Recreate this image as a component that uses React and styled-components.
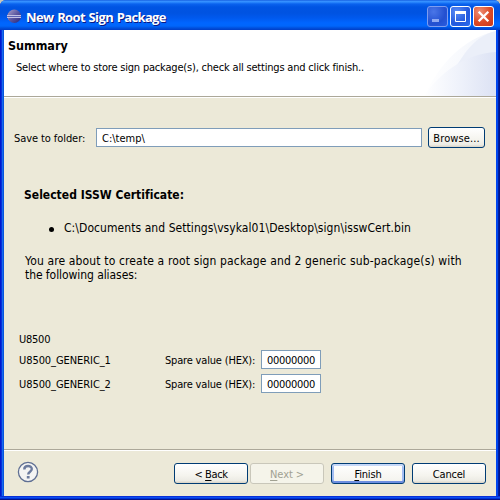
import React from "react";
import styled, { createGlobalStyle, css } from "styled-components";

const GlobalStyle = createGlobalStyle`
  * { box-sizing: border-box; }
  body { margin: 0; overflow: hidden; background: #c9c7ba; }
`;

const Window = styled.main`
  width: 500px;
  height: 500px;
  display: flex;
  flex-direction: column;
  padding: 0 4px 4px;
  overflow: hidden;
  border-radius: 6px 6px 0 0;
  background:
    linear-gradient(#0a2fd8 0 1px, #0a4ff0 1px 2px, #0030d8 2px 3px, #00138c 3px) 0 100% / 100% 4px no-repeat,
    linear-gradient(90deg, #0019cf 0 1px, #0831d9 1px 2px, #166aee 2px 3px, #0855dd 3px) 0 0 / 4px 100% no-repeat,
    linear-gradient(90deg, #0044ee 0 1px, #0048f0 1px 2px, #001ea0 2px 3px, #00138c 3px) 100% 0 / 4px 100% no-repeat,
    #0054e3;
  color: #000;
  font: 11px/13px "DejaVu Sans Condensed", "DejaVu Sans", sans-serif;
`;

const TitleBar = styled.header`
  flex: none;
  height: 30px;
  margin: 0 -4px;
  padding: 3px 6px 0 7px;
  display: flex;
  align-items: center;
  background: linear-gradient(
    #0a4fd8 0, #3a93ff 1px, #2f8cff 2px, #0a62ee 4px, #0054e3 7px,
    #0053e1 13px, #0059ee 18px, #0066ff 23px, #0066fb 26px, #0050dd 28px, #003dc6 30px
  );
`;

const Title = styled.h1`
  flex: 1;
  margin: 0 0 0 4px;
  color: #fff;
  font: bold 13px/18px "Open Sans", "Noto Sans", sans-serif;
  letter-spacing: -0.65px;
  word-spacing: 1px;
  text-shadow: 1px 1px 0 #0a1883;
  white-space: nowrap;
`;

const Controls = styled.div`
  display: flex;
  gap: 2px;
`;

const tones = {
  dim: css`
    border-color: #7e9df0;
    background: radial-gradient(circle at 30% 25%, #4a76e8, #2350d0 60%, #2a5ce0);
  `,
  blue: css`
    border-color: #fff;
    background: radial-gradient(circle at 30% 25%, #5a8cf5, #2459dd 60%, #2a6cf0);
  `,
  red: css`
    border-color: #fff;
    background: radial-gradient(circle at 30% 25%, #ee9077, #dc4a26 55%, #c9371a);
  `,
};

const Control = styled.button`
  width: 21px;
  height: 21px;
  padding: 0;
  display: grid;
  place-items: center;
  border: 1px solid;
  border-radius: 3px;
  ${({ $tone }) => tones[$tone]}
  svg { display: block; }
`;

const Banner = styled.section`
  flex: none;
  height: 66px;
  display: flex;
  justify-content: space-between;
  background: #fff;
`;

const BannerText = styled.div`
  flex: none;
  padding: 8px 0 0 4px;
`;

const Heading = styled.h2`
  margin: 0;
  font-size: 12.5px;
  line-height: 15px;
  letter-spacing: -0.05px;
`;

const Description = styled.p`
  margin: 8px 0 0 8px;
  letter-spacing: -0.19px;
  white-space: nowrap;
`;

const Swoosh = styled.svg`
  flex: none;
  display: block;
  margin-left: -30px;
`;

const Separator = styled.div`
  flex: none;
  height: 2px;
  background: linear-gradient(#aca899 50%, #fff 50%);
`;

const Content = styled.section`
  flex: 1;
  display: flex;
  flex-direction: column;
  background: #ece9d8;
`;

const FolderRow = styled.div`
  display: flex;
  align-items: center;
  margin: 29px 11px 0 10px;
`;

const Label = styled.label`
  width: ${({ $width }) => $width}px;
  flex: none;
  padding-top: 2px;
  letter-spacing: ${({ $spacing = 0 }) => $spacing}px;
  white-space: nowrap;
`;

const Field = styled.input`
  width: ${({ $width }) => $width}px;
  height: 19px;
  padding: 1px 0 0 5px;
  border: 1px solid #7f9db9;
  border-radius: 0;
  outline: none;
  background: #fff;
  color: #000;
  font: inherit;
  letter-spacing: ${({ $spacing = 0 }) => $spacing}px;
`;

const buttonKinds = {
  normal: css`
    border-color: #003c74;
    background: linear-gradient(#fff, #f5f4ee 60%, #ecebe4 88%, #d8d2c5);
  `,
  primary: css`
    border-color: #003c74;
    background: linear-gradient(#fff, #f3f2ec);
    box-shadow: inset 0 2px #c6d8f8, inset 0 -2px #6d8ee0, inset 2px 0 #a3bdf2, inset -2px 0 #a3bdf2;
  `,
  disabled: css`
    border-color: #c9c7ba;
    background: #f5f4ea;
    color: #a1a192;
  `,
};

const Button = styled.button`
  flex: none;
  width: ${({ $width = 74 }) => $width}px;
  height: 21px;
  padding: 2px 0 0;
  border: 1px solid;
  border-radius: 3px;
  color: #000;
  font: inherit;
  letter-spacing: ${({ $spacing = 0 }) => $spacing}px;
  text-align: center;
  white-space: nowrap;
  ${({ $kind = "normal" }) => buttonKinds[$kind]}
  u { text-underline-offset: 2px; text-decoration-thickness: 1px; text-decoration-skip-ink: none; }
`;

const BrowseButton = styled(Button)`
  margin-left: 6px;
`;

const Report = styled.article`
  margin: 40px 0 0 20px;
  font-size: 12px;
  line-height: 14px;
`;

const ReportTitle = styled.h3`
  margin: 0;
  font-size: 12px;
  letter-spacing: 0.02px;
`;

const FileList = styled.ul`
  list-style: none;
  margin: 19px 0 19px 25px;
  padding: 0;
`;

const FileItem = styled.li`
  display: flex;
  align-items: center;
  gap: 10px;
  letter-spacing: 0.065px;
  white-space: nowrap;
  &::before {
    content: "";
    width: 5px;
    height: 5px;
    margin-top: 2px;
    border-radius: 50%;
    background: #000;
  }
`;

const Paragraph = styled.p`
  margin: 0 0 0 1px;
  white-space: nowrap;
`;

const Line = styled.span`
  display: block;
  letter-spacing: ${({ $spacing }) => $spacing}px;
`;

const Aliases = styled.div`
  margin: 50px 0 0 15px;
`;

const AliasGroup = styled.div`
  height: 18px;
  padding-top: 1px;
  letter-spacing: -0.25px;
`;

const AliasRow = styled.div`
  display: flex;
  align-items: center;
  height: 19px;
  margin-bottom: 5px;
`;

const Footer = styled.footer`
  flex: none;
  height: 45px;
  display: flex;
  align-items: center;
  padding: 0 10px 0 13px;
  background: #ece9d8;
`;

const Help = styled.svg`
  display: block;
  margin: 0 auto 3px 0;
`;

const NextButton = styled(Button)`
  margin: 0 7px 0 2px;
`;

const CancelButton = styled(Button)`
  margin-left: 7px;
`;

function EclipseLogo() {
  return (
    <svg width="15" height="15" viewBox="0 0 15 15">
      <defs>
        <linearGradient id="orb" x1="0" x2="1" y1="0" y2="1">
          <stop offset="0" stopColor="#a9a0c9" />
          <stop offset=".5" stopColor="#5b57a0" />
          <stop offset="1" stopColor="#27247a" />
        </linearGradient>
      </defs>
      <circle cx="7.3" cy="7.3" r="6.7" fill="url(#orb)" />
      <path d="M2.5 2.5A7 7 0 0 0 2.5 12A9 9 0 0 1 2.5 2.5" fill="#c88f98" />
      <path d="M0 6.5H14M0 8.5H14" stroke="#c3c2e4" strokeWidth="1" />
      <path d="M1 7.5H14" stroke="#5d62b4" />
    </svg>
  );
}

const aliases = [
  { name: "U8500_GENERIC_1", value: "00000000" },
  { name: "U8500_GENERIC_2", value: "00000000" },
];

export default function App() {
  return (
    <>
      <GlobalStyle />
      <Window>
        <TitleBar>
          <EclipseLogo />
          <Title>New Root Sign Package</Title>
          <Controls>
            <Control $tone="dim" aria-label="Minimize">
              <svg width="19" height="19"><path d="M4 12h7v3H4z" fill="#8fa9f2" /></svg>
            </Control>
            <Control $tone="blue" aria-label="Maximize">
              <svg width="19" height="19">
                <path d="M4.5 5v9.5h10V5" fill="none" stroke="#fff" />
                <path d="M4 4h11v3H4z" fill="#fff" />
              </svg>
            </Control>
            <Control $tone="red" aria-label="Close">
              <svg width="19" height="19">
                <path d="M4.7 4.7l9.6 9.6M14.3 4.7l-9.6 9.6" stroke="#fff" strokeWidth="2.3" />
              </svg>
            </Control>
          </Controls>
        </TitleBar>

        <Banner>
          <BannerText>
            <Heading>Summary</Heading>
            <Description>Select where to store sign package(s), check all settings and click finish..</Description>
          </BannerText>
          <Swoosh width="76" height="66" viewBox="0 0 76 66">
            <defs>
              <linearGradient id="wave">
                <stop offset="0" stopColor="#fff" />
                <stop offset=".45" stopColor="#f0f3fb" />
                <stop offset="1" stopColor="#dce2f4" />
              </linearGradient>
              <linearGradient id="wash">
                <stop offset="0" stopColor="#fff" />
                <stop offset="1" stopColor="#f1f4fb" />
              </linearGradient>
            </defs>
            <path d="M4 66C20 34 42 9 76 1V66Z" fill="url(#wash)" />
            <path d="M34 40C46 20 56 6 76 1V30Z" fill="#ebeff9" />
            <path d="M4 66C20 43 44 24 76 22V66Z" fill="url(#wave)" />
          </Swoosh>
        </Banner>
        <Separator />

        <Content>
          <FolderRow>
            <Label htmlFor="folder" $width={82} $spacing={-0.08}>Save to folder:</Label>
            <Field id="folder" readOnly $width={326} value={"C:\\temp\\"} />
            <BrowseButton $width={57} $spacing={0.1}>Browse...</BrowseButton>
          </FolderRow>

          <Report>
            <ReportTitle>Selected ISSW Certificate:</ReportTitle>
            <FileList>
              <FileItem>{"C:\\Documents and Settings\\vsykal01\\Desktop\\sign\\isswCert.bin"}</FileItem>
            </FileList>
            <Paragraph>
              <Line $spacing={0.14}>You are about to create a root sign package and 2 generic sub-package(s) with</Line>
              <Line $spacing={-0.07}>the following aliases:</Line>
            </Paragraph>
          </Report>

          <Aliases>
            <AliasGroup>U8500</AliasGroup>
            {aliases.map(({ name, value }) => (
              <AliasRow key={name}>
                <Label as="span" $width={146} $spacing={-0.07}>{name}</Label>
                <Label htmlFor={name} $width={96} $spacing={-0.18}>Spare value (HEX):</Label>
                <Field id={name} readOnly $width={60} $spacing={-0.3} value={value} />
              </AliasRow>
            ))}
          </Aliases>
        </Content>

        <Separator />
        <Footer>
          <Help width="22" height="22" viewBox="0 0 22 22">
            <circle cx="11" cy="11" r="9.6" fill="#f4f4f3" stroke="#5f6f93" strokeWidth="1.3" />
            <path d="M7.3 8.4C7.3 3.9 14.8 4 14.8 8.1C14.8 10.7 11.2 10.7 11.2 13.5" fill="none" stroke="#6c7b9e" strokeWidth="2.4" />
            <path d="M9.8 15h2.8v2.5H9.8z" fill="#6c7b9e" />
          </Help>
          <Button $spacing={-0.4}>&lt; <u>B</u>ack</Button>
          <NextButton disabled $kind="disabled" $spacing={-0.1}><u>N</u>ext &gt;</NextButton>
          <Button $kind="primary" $spacing={-0.15}><u>F</u>inish</Button>
          <CancelButton $spacing={-0.2}>Cancel</CancelButton>
        </Footer>
      </Window>
    </>
  );
}
